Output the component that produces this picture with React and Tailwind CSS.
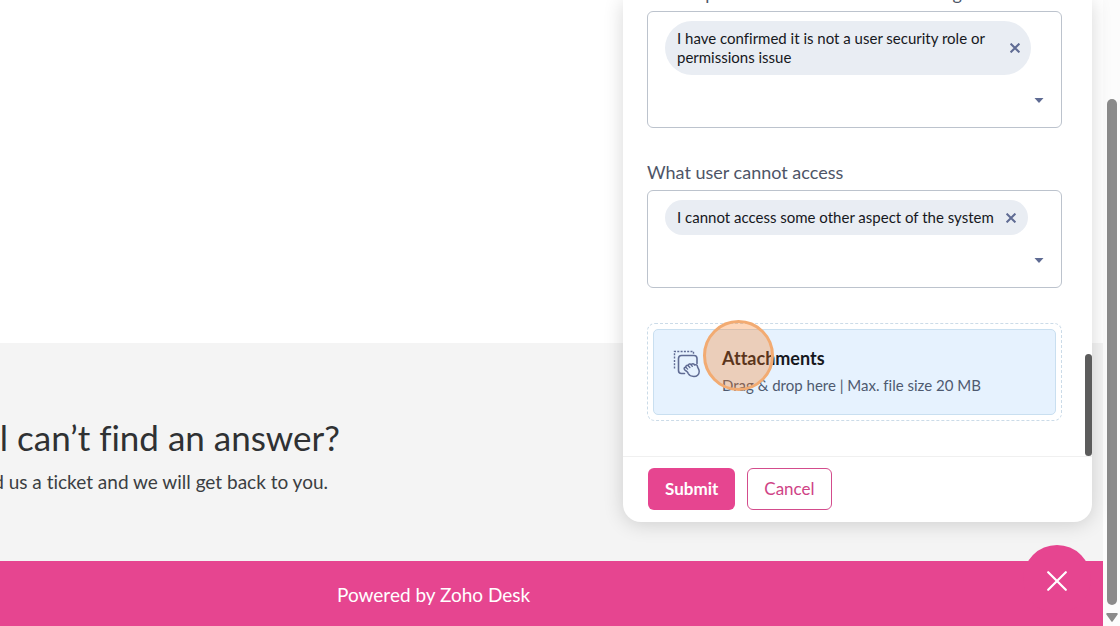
import React from "react";

function CrossIcon({ className }) {
  return (
    <svg viewBox="0 0 10 10" className={className} fill="none" stroke="currentColor" strokeWidth="2" aria-hidden="true">
      <path d="M0.600 0.600 9.400 9.400M9.400 0.600 0.600 9.400" />
    </svg>
  );
}

function DragHandIcon() {
  return (
    <svg viewBox="0 0 28 28" className="size-7 shrink-0 text-[#5f6b93]" fill="none" stroke="currentColor" aria-hidden="true">
      <path d="M1.500 18.500V1.500H20.500V4" strokeWidth="1.400" strokeDasharray="2 1.300" />
      <path d="M11.500 23.500H8.500a3 3 0 0 1-3-3V8.500a3 3 0 0 1 3-3h12.500a3 3 0 0 1 3 3v5" strokeWidth="1.600" strokeLinecap="round" />
      <path
        d="M14 21.600 11.700 19.800c-1.300-1.100-.2-3 1.300-2.300-.8-1.700 1-3 2.300-1.700-.2-1.800 2-2.600 3-1 .6-1.600 2.800-1.500 3.200.2 1.600-.8 2.900.2 3 1.700.4 1.600 1.700 2.800 1.700 4.800 0 3-2.300 4.900-5.300 4.900-2.700 0-4.600-.9-5.700-2.900-.5-1-.6-1.500-1.200-1.900Z"
        strokeWidth="1.500"
        strokeLinejoin="round"
        fill="#e6f2fe"
      />
      <path d="M13 17.500l1.700 1.600M15.300 15.800l1.600 1.700M18.300 14.800l1 1.600" strokeWidth="1.300" strokeLinecap="round" />
    </svg>
  );
}

function MultiSelect({ id, label, children, tall }) {
  return (
    <div role="group" aria-labelledby={id} className="flex flex-col">
      <span id={id} className="mb-[9px] block text-lg leading-[18px] whitespace-nowrap text-[#4e5567]">
        {label}
      </span>
      <div
        className={
          "flex flex-col items-start justify-between rounded-md border border-[#bcc3cd] pl-[17px] pr-[14px] pt-[9px] pb-[17px] " +
          (tall ? "min-h-[117px]" : "min-h-[98px]")
        }
      >
        {children}
        <button type="button" aria-label={"Open " + label} className="flex h-5 w-4 items-center justify-center self-end text-[#5f6b93]">
          <svg viewBox="0 0 10 5" className="h-[5px] w-[10px]" fill="currentColor" aria-hidden="true">
            <path d="M0.500 0h9L5 5Z" />
          </svg>
        </button>
      </div>
    </div>
  );
}

function Chip({ children, wide }) {
  return (
    <div
      className={
        "flex items-center justify-between rounded-[27px] bg-[#e9edf3] py-2 pl-3 text-[15px] leading-[19px] text-[#16181d] " +
        (wide ? "max-w-[366px] gap-2 pr-[11px]" : "gap-3 pr-3")
      }
    >
      <span>{children}</span>
      <button type="button" aria-label={"Remove " + children} className="shrink-0 text-[#5f6b93]">
        <CrossIcon className="size-[10px]" />
      </button>
    </div>
  );
}

function TicketForm() {
  return (
    <form
      onSubmit={(e) => e.preventDefault()}
      className="absolute top-0 right-[28px] bottom-[104px] flex w-[469px] flex-col overflow-hidden rounded-b-[18px] bg-white shadow-[0_2px_20px_rgba(0,0,0,0.16)]"
    >
      <div className="relative flex flex-1 flex-col justify-end gap-[35px] overflow-hidden pr-[30px] pb-[35px] pl-6">
        <MultiSelect id="steps" label="The steps that were taken to resolve login issue" tall>
          <Chip wide>I have confirmed it is not a user security role or permissions issue</Chip>
        </MultiSelect>
        <MultiSelect id="access" label="What user cannot access">
          <Chip>I cannot access some other aspect of the system</Chip>
        </MultiSelect>
        <div className="relative rounded-lg border border-dashed border-[#cbdbe8] p-[5px]">
          <label
            htmlFor="files"
            className="flex h-[86px] items-start gap-[21px] rounded-[5px] border border-[#c9dff0] bg-[#e6f2fe] pt-4 pl-[19px]"
          >
            <span className="pt-1">
              <DragHandIcon />
            </span>
            <span className="flex flex-col gap-[3px]">
              <span className="text-lg leading-6 font-bold text-[#16181d]">Attachments</span>
              <span className="text-[15px] leading-6 text-[#4e5a70]">Drag &amp; drop here | Max. file size 20 MB</span>
            </span>
          </label>
          <input id="files" type="file" className="sr-only" />
          <span className="pointer-events-none absolute -top-1 left-[55px] size-[71px] rounded-full border-[3px] border-[#f2ab72] bg-[#f9791f]/30" />
        </div>
        <span className="absolute right-0 bottom-0 h-[102px] w-[7px] rounded-full bg-[#5c5c5c]" />
      </div>
      <div className="flex gap-3 border-t border-[#f0f0f0] px-[25px] pt-[11px] pb-3">
        <button type="submit" className="h-[42px] rounded-md bg-[#e64590] px-[17px] text-[17px] font-bold text-white">
          Submit
        </button>
        <button type="button" className="h-[42px] rounded-md border border-[#d34c8c] bg-white px-4 text-[17px] text-[#cf4386]">
          Cancel
        </button>
      </div>
    </form>
  );
}

export default function App() {
  return (
    <div className="relative flex min-h-screen overflow-hidden bg-white font-['Lato',sans-serif] [font-variant-ligatures:none]">
      <main className="flex min-w-0 flex-1 flex-col">
        <div className="flex-1" />
        <section className="h-[218px] overflow-hidden bg-[#f4f4f4] pt-[69px]">
          <div className="flex w-[340px] flex-col items-end gap-[6px] whitespace-nowrap">
            <h2 className="text-[35px] leading-[50px] text-[#2f3133]">Still can’t find an answer?</h2>
            <p className="pr-3 text-[19px] leading-7 text-[#3b3e42]">Send us a ticket and we will get back to you.</p>
          </div>
        </section>
        <footer className="flex h-[65px] items-center bg-[#e64590] pt-1 pl-[337px] text-[19px] text-white">
          <p>Powered by Zoho Desk</p>
        </footer>
      </main>
      <div className="flex w-[17px] shrink-0 flex-col items-center bg-[#fcfcfc] pt-[99px] pb-1" aria-hidden="true">
        <div className="w-[10px] flex-1 rounded-full bg-[#8b8b8b]" />
        <svg viewBox="0 0 12 9" className="mt-2 h-[9px] w-3" fill="#8b8b8b">
          <path d="M1.200 0h9.600a1 1 0 0 1 .8 1.600L6.800 8.300a1 1 0 0 1-1.600 0L.4 1.600A1 1 0 0 1 1.200 0Z" />
        </svg>
      </div>
      <TicketForm />
      <button
        type="button"
        aria-label="Close"
        className="absolute right-[29px] bottom-[13px] flex size-[68px] items-center justify-center rounded-full bg-[#e64590] pt-[3px] text-white"
      >
        <svg viewBox="0 0 20 20" className="size-5" fill="none" stroke="currentColor" strokeWidth="2.200" strokeLinecap="round" aria-hidden="true">
          <path d="M1.200 1.200 18.800 18.800M18.800 1.200 1.200 18.800" />
        </svg>
      </button>
    </div>
  );
}
